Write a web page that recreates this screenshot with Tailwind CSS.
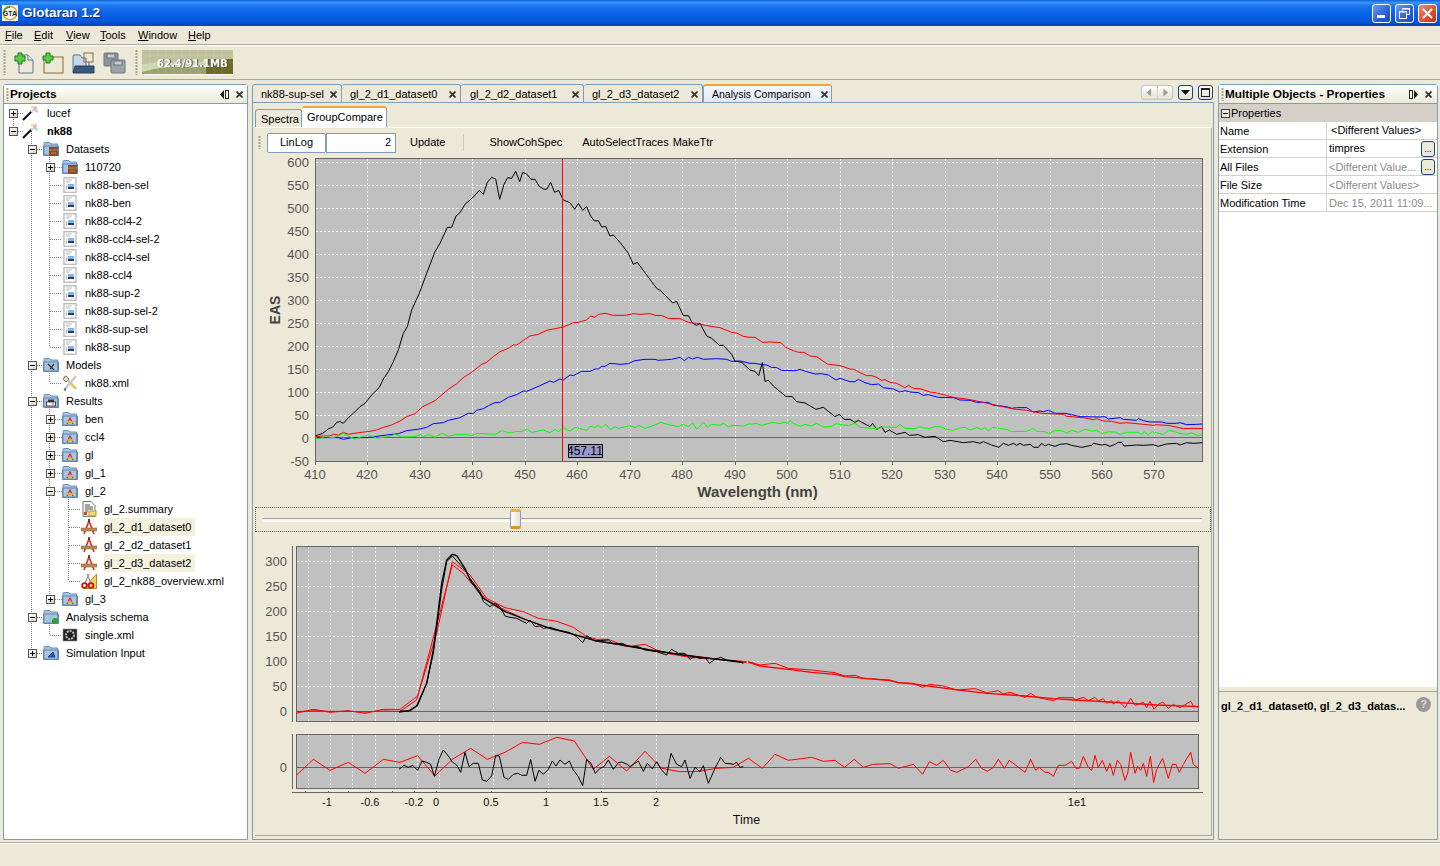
<!DOCTYPE html>
<html lang="en">
<head>
  <meta charset="UTF-8">
  <title>Glotaran 1.2</title>
  <script src="https://cdn.jsdelivr.net/npm/@tailwindcss/browser@4"></script>
</head>
<body class="w-[1440px] h-[866px] overflow-hidden flex flex-col bg-[#ece9d8] text-black text-[11px] leading-none font-['Liberation_Sans',sans-serif]">

  <!-- shared icons -->
  <svg class="hidden" width="0" height="0">
    <defs>
      <linearGradient id="fold" x1="0" y1="0" x2="0" y2="1"><stop offset="0" stop-color="#d8e6f5"/><stop offset="1" stop-color="#6b9dd0"/></linearGradient>
      <linearGradient id="docg" x1="0" y1="0" x2="1" y2="1"><stop offset="0" stop-color="#ffffff"/><stop offset="1" stop-color="#c3d4e6"/></linearGradient>
      <linearGradient id="orng" x1="0" y1="0" x2="0" y2="1"><stop offset="0" stop-color="#fbd9a6"/><stop offset="1" stop-color="#eba452"/></linearGradient>
      <symbol id="wand" viewBox="0 0 16 16">
        <path d="M1 15L10 6" stroke="#111" stroke-width="2.200"/><path d="M9 7l2-2" stroke="#ddd" stroke-width="2"/>
        <circle cx="13" cy="3" r="2" fill="#f6a6c8"/><circle cx="10" cy="2" r="1.300" fill="#f9e27a"/><circle cx="14.500" cy="6" r="1.500" fill="#9ce0b0"/><circle cx="12" cy="5" r="1.200" fill="#a8c8f4"/>
      </symbol>
      <symbol id="folder" viewBox="0 0 16 16">
        <path d="M1 14V2.500Q1 1.500 2 1.500H6.500L8 3H14.500V14Z" fill="#a8c4e2" stroke="#6a8fb5"/>
        <path d="M.5 14.500V5H15.500V14.500Z" fill="url(#fold)" stroke="#5f87b0"/>
      </symbol>
      <symbol id="f-data" viewBox="0 0 16 16"><use href="#folder"/><rect x="6" y="6" width="9" height="9" fill="#8a4a22"/><path d="M6 9h9M8 12h5" stroke="#c98a50"/></symbol>
      <symbol id="f-model" viewBox="0 0 16 16"><use href="#folder"/><path d="M5 7l6 6M7 12l4-5" stroke="#333" stroke-width="1.300"/></symbol>
      <symbol id="f-res" viewBox="0 0 16 16"><use href="#folder"/><rect x="3.500" y="9" width="9" height="4" fill="#fff" stroke="#444"/><rect x="5" y="6.500" width="6" height="2.500" fill="#333"/><path d="M9 11h2" stroke="#d33"/></symbol>
      <symbol id="f-a" viewBox="0 0 16 16"><use href="#folder"/><path d="M5 13L8 7l3 6" fill="none" stroke="#d43020" stroke-width="1.300"/><path d="M5 11h6" stroke="#f0b020" stroke-width="1.500"/></symbol>
      <symbol id="f-green" viewBox="0 0 16 16"><use href="#folder"/><path d="M4 12l7-6" stroke="#8fd0a0"/><circle cx="12" cy="12" r="3" fill="#2fa030"/></symbol>
      <symbol id="f-sim" viewBox="0 0 16 16"><use href="#folder"/><path d="M5 12L10 7l2 5Z" fill="#2a66b0" stroke="#123e78"/></symbol>
      <symbol id="doc" viewBox="0 0 16 16">
        <rect x="2" y=".7" width="12" height="14.600" fill="#fff" stroke="#bcbcbc" stroke-width="1.400"/>
        <path d="M4 3h6M4 5h4" stroke="#bbb"/><rect x="6" y="7" width="6" height="3" fill="#7fb4e6"/><rect x="6" y="10" width="6" height="2" fill="#223a66"/><path d="M4.500 8v5" stroke="#bbb"/>
      </symbol>
      <symbol id="tools" viewBox="0 0 16 16"><path d="M2 1l12 13" stroke="#e8c860" stroke-width="2.600"/><path d="M14 1L3 14" stroke="#c8c8c8" stroke-width="2.400"/><path d="M1 4l3-3 3 3-3 3Z" fill="#ddd" stroke="#777"/><path d="M2 14l2 1" stroke="#666" stroke-width="2"/></symbol>
      <symbol id="compass" viewBox="0 0 16 16"><path d="M3 15L8 2l5 13" fill="none" stroke="#d23a26" stroke-width="1.700"/><rect x="0" y="9" width="16" height="3" fill="#b98a50" stroke="#7d5a30" stroke-width=".5"/><path d="M8 0v3" stroke="#333" stroke-width="1.500"/></symbol>
      <symbol id="summary" viewBox="0 0 16 16"><path d="M2 .5H10L14 4.500V15.500H2Z" fill="#f6f6f2" stroke="#777"/><path d="M4 4h5M4 6h8M4 8h8M4 10h3" stroke="#555"/><rect x="8" y="10" width="7" height="5" fill="#f3d878" stroke="#b89a30"/><rect x="3" y="11" width="3" height="3" fill="#c05020"/></symbol>
      <symbol id="scissors" viewBox="0 0 16 16"><path d="M15.500 1V15.500H3Z" fill="#f4d060" stroke="#b08a20"/><path d="M4 10L8 1M10 10L6 1" stroke="#999" stroke-width="1.300"/><circle cx="3.500" cy="12.500" r="2.400" fill="none" stroke="#c41818" stroke-width="1.800"/><circle cx="10" cy="12.500" r="2.400" fill="none" stroke="#c41818" stroke-width="1.800"/></symbol>
      <symbol id="single" viewBox="0 0 16 16"><rect x="1" y="2" width="14" height="12" fill="#222"/><circle cx="8" cy="8" r="4" fill="none" stroke="#bbb" stroke-width="2" stroke-dasharray="2 1"/><rect x="1" y="2" width="14" height="12" fill="none" stroke="#999" stroke-width=".6"/></symbol>
      <symbol id="dots" viewBox="0 0 3 27"><path d="M1.500 1v25" stroke="#a8a490" stroke-width="2" stroke-dasharray="2 1"/></symbol>
      <symbol id="close" viewBox="0 0 7 7"><path d="M.5.5l6 6M6.500.5l-6 6" stroke="#333" stroke-width="1.700"/></symbol>
    </defs>
  </svg>

  <!-- title bar -->
  <header class="h-[26px] shrink-0 flex items-center pl-[2px] pr-[3px] bg-[linear-gradient(180deg,#0a5fdc_0%,#3b94f7_10%,#1a76ee_22%,#0a63e6_50%,#0458dc_80%,#0345b8_100%)]">
    <svg width="16" height="16" viewBox="0 0 16 16"><rect width="16" height="16" fill="#fff"/><circle cx="8" cy="8" r="6.800" fill="#fff" stroke="#d9a21c" stroke-width="1.400"/><path d="M2 8a6 6 0 0 1 6-6" fill="none" stroke="#2f9b3c" stroke-width="1.400"/><text x="8" y="10.500" text-anchor="middle" font-size="7" font-weight="700" fill="#222">GTA</text></svg>
    <span class="ml-1 text-white text-[13.500px] font-bold [text-shadow:1px_1px_#0a2a80]">Glotaran 1.2</span>
    <div class="ml-auto flex gap-1">
      <div class="w-[19px] h-[19px] rounded-[3px] border border-white bg-[linear-gradient(135deg,#6f9cf2,#2a5fdc_60%,#1d48c0)] flex items-end pl-1 pb-1"><span class="w-[8px] h-[3px] bg-white"></span></div>
      <div class="w-[19px] h-[19px] rounded-[3px] border border-white bg-[linear-gradient(135deg,#6f9cf2,#2a5fdc_60%,#1d48c0)] relative">
        <svg class="absolute inset-0" width="17" height="17" viewBox="0 0 17 17" fill="none" stroke="#fff"><path d="M6.500 5.500V3.500H13.500V9.500H11"/><path d="M3.500 6.500H10.500V13.500H3.500Z"/><path d="M3 7h8M6 4h8"/></svg>
      </div>
      <div class="w-[19px] h-[19px] rounded-[3px] border border-white bg-[linear-gradient(135deg,#ee9070,#d8502c_60%,#b83410)]">
        <svg width="17" height="17" viewBox="0 0 17 17" stroke="#fff" stroke-width="2"><path d="M4 4l9 9M13 4l-9 9"/></svg>
      </div>
    </div>
  </header>

  <!-- menu -->
  <nav class="h-[19px] shrink-0 flex items-center pl-[5px] border-b border-[#aca899] text-[11px]">
    <span class="w-[29px]"><span class="underline">F</span>ile</span>
    <span class="w-[32px]"><span class="underline">E</span>dit</span>
    <span class="w-[34px]"><span class="underline">V</span>iew</span>
    <span class="w-[38px]"><span class="underline">T</span>ools</span>
    <span class="w-[50px]"><span class="underline">W</span>indow</span>
    <span><span class="underline">H</span>elp</span>
  </nav>

  <!-- toolbar -->
  <div class="h-[35px] shrink-0 flex items-center pl-[3px] border-t border-white border-b border-b-[#aca899]">
    <svg width="3" height="27"><use href="#dots"/></svg>
    <svg class="ml-[7px]" width="22" height="22" viewBox="0 0 22 22"><path d="M6 3H15L20 8V21H6Z" fill="url(#docg)" stroke="#5d7896"/><path d="M15 3V8H20" fill="#e8eef5" stroke="#5d7896"/><path d="M5 1V4H2V9H5V12H9V9H12V4H9V1Z" fill="#5cc94a" stroke="#1c7a1c"/></svg>
    <svg class="ml-[7px]" width="22" height="22" viewBox="0 0 22 22"><rect x="2" y="5" width="19" height="16" fill="url(#orng)" stroke="#8a6a3c"/><path d="M4 1V4H1V8H4V11H8V8H11V4H8V1Z" fill="#5cc94a" stroke="#1c7a1c"/></svg>
    <svg class="ml-[8px]" width="23" height="22" viewBox="0 0 23 22"><path d="M1 20V4Q1 3 2 3H8L10 6H14V20Z" fill="#c4d6e8" stroke="#60788f"/><rect x="12" y="1" width="9" height="9" fill="url(#orng)" stroke="#8a6a3c"/><path d="M17 10v4" stroke="#555"/><path d="M1 21L3 14H22V21Z" fill="#365a7c" stroke="#24405c"/></svg>
    <svg class="ml-[8px]" width="23" height="22" viewBox="0 0 23 22" fill="#8c949c" stroke="#6e767e"><rect x="1" y="1" width="14" height="13" rx="1"/><rect x="8" y="8" width="14" height="13" rx="1" fill="#9aa2aa"/><rect x="11" y="9" width="8" height="4" fill="#c9cdd1"/><rect x="4" y="2" width="8" height="4" fill="#c9cdd1"/></svg>
    <svg class="ml-[9px]" width="3" height="27"><use href="#dots"/></svg>
    <div class="ml-[4px] relative w-[91px] h-[25px] border-b border-white bg-[#bdc19c] overflow-hidden">
      <svg class="absolute inset-0" width="91" height="25" viewBox="0 0 91 25">
        <path d="M0 14Q20 11 40 13T64 9V25H0Z" fill="#d0d8b0"/><path d="M0 22Q20 16 45 17T64 12V25H0Z" fill="#9aa26e"/><path d="M64 9H91V25H64Z" fill="#6b6a26"/>
        <path d="M0 6H91M0 12H91M8 0V25M16 0V25M24 0V25M32 0V25M40 0V25M48 0V25M56 0V25M64 0V25M72 0V25M80 0V25" stroke="#fff" stroke-opacity=".12"/>
      </svg>
      <span class="absolute left-[15px] top-[9px] text-white font-bold text-[10px] font-['DejaVu_Sans',sans-serif] [text-shadow:1px_0_#444]">62.4/91.1MB</span>
    </div>
  </div>

  <!-- main area -->
  <main class="h-[762px] shrink-0 flex pl-[3px] pt-[4px] pb-[2px]">

    <!-- projects -->
    <section class="w-[245px] flex flex-col border border-[#7f9db9] rounded-t-[3px]">
      <div class="h-[19px] shrink-0 flex items-center pl-[2px] pr-[4px] bg-[linear-gradient(180deg,#fff,#ece9d8)] border-b border-[#7f9db9]">
        <svg width="3" height="13" viewBox="0 0 3 13"><path d="M1.500 0v13" stroke="#a8a490" stroke-width="2" stroke-dasharray="2 1"/></svg>
        <span class="ml-[1px] pt-[1px] font-bold text-[11.800px]">Projects</span>
        <svg class="ml-auto" width="9" height="9" viewBox="0 0 9 9"><path d="M4 0L0 4.500 4 9Z" fill="#222"/><rect x="5.500" y=".5" width="3" height="8" fill="#fff" stroke="#222"/></svg>
        <svg class="ml-[7px]" width="7" height="7"><use href="#close"/></svg>
      </div>
      <div class="relative flex-1 bg-white overflow-hidden">
        <svg class="absolute left-0 top-0" width="243" height="560" viewBox="4 104 243 560" fill="none" stroke="#808080" stroke-dasharray="1 1" shape-rendering="crispEdges">
          <path d="M13.500 113V131M18 113.500H24M18 131.500H24"/>
          <path d="M31.500 131V653M37 149.500H43M37 365.500H43M37 401.500H43M37 617.500H43M37 653.500H43"/>
          <path d="M49.500 149V347M55 167.500H62M50 185.500H62M50 203.500H62M50 221.500H62M50 239.500H62M50 257.500H62M50 275.500H62M50 293.500H62M50 311.500H62M50 329.500H62M50 347.500H62"/>
          <path d="M49.500 365V383M50 383.500H62"/>
          <path d="M49.500 401V599M55 419.500H62M55 437.500H62M55 455.500H62M55 473.500H62M55 491.500H62M55 599.500H62"/>
          <path d="M68.500 491V581M69 509.500H81M69 527.500H81M69 545.500H81M69 563.500H81M69 581.500H81"/>
          <path d="M49.500 617V635M50 635.500H62"/>
        </svg>
        <div id="tree" class="relative"></div>
      </div>
    </section>

    <!-- editor area -->
    <section class="ml-[4px] w-[962px] flex flex-col">
      <div class="h-[18px] shrink-0 flex items-start">
        <div class="w-[90px] h-[18px] flex items-center pl-[8px] pt-[1px] border border-b-0 border-[#7f9db9] rounded-t-[3px]">nk88-sup-sel<svg class="ml-auto mr-[4px]" width="7" height="7"><use href="#close"/></svg></div>
        <div class="w-[119px] h-[18px] flex items-center pl-[8px] pt-[1px] border border-l-0 border-b-0 border-[#7f9db9] rounded-t-[3px]">gl_2_d1_dataset0<svg class="ml-auto mr-[4px]" width="7" height="7"><use href="#close"/></svg></div>
        <div class="w-[123px] h-[18px] flex items-center pl-[9px] pt-[1px] border border-l-0 border-b-0 border-[#7f9db9] rounded-t-[3px]">gl_2_d2_dataset1<svg class="ml-auto mr-[4px]" width="7" height="7"><use href="#close"/></svg></div>
        <div class="w-[119px] h-[18px] flex items-center pl-[8px] pt-[1px] border border-l-0 border-b-0 border-[#7f9db9] rounded-t-[3px]">gl_2_d3_dataset2<svg class="ml-auto mr-[4px]" width="7" height="7"><use href="#close"/></svg></div>
        <div class="w-[129px] h-[19px] flex items-center pl-[8px] text-[10.500px] border-x border-[#7f9db9] border-t-2 border-t-[#f0a830] rounded-t-[3px] bg-[linear-gradient(180deg,#f6f8fd,#dfe8f8)]">Analysis Comparison<svg class="ml-auto mr-[3px]" width="7" height="7"><use href="#close"/></svg></div>
        <div class="ml-auto flex items-center gap-[5px] pt-[1px] pr-[1px]">
          <div class="w-[32px] h-[15px] flex border border-[#b5c4d6] rounded-[3px] bg-[linear-gradient(180deg,#fff,#e4e1d0)]">
            <svg class="flex-1" viewBox="0 0 16 13"><path d="M10 2L5 6.500 10 11Z" fill="#9a9a9a"/></svg>
            <svg class="flex-1 border-l border-[#d4d0c8]" viewBox="0 0 16 13"><path d="M6 2L11 6.500 6 11Z" fill="#9a9a9a"/></svg>
          </div>
          <div class="w-[15px] h-[15px] border border-[#1c4478] rounded-[3px] bg-[linear-gradient(180deg,#fff,#e4e1d0)] flex items-center justify-center"><svg width="9" height="5"><path d="M0 0H9L4.500 5Z" fill="#111"/></svg></div>
          <div class="w-[15px] h-[15px] border border-[#1c4478] rounded-[3px] bg-[linear-gradient(180deg,#fff,#e4e1d0)] flex items-center justify-center"><span class="w-[9px] h-[9px] border border-[#222] border-t-2"></span></div>
        </div>
      </div>

      <div class="flex-1 min-h-0 flex flex-col border border-[#7f9db9] pl-[2px] pr-[1px] pb-[3px]">
        <div class="h-[24px] shrink-0 flex items-end">
          <div class="w-[47px] h-[18px] flex items-center pl-[5px] pt-[1px] border border-b-0 border-[#7f9db9] rounded-t-[3px]">Spectra</div>
          <div class="w-[85px] h-[21px] flex items-center pl-[5px] border-r border-[#999] border-t-2 border-t-[#f0a830] rounded-t-[3px] bg-white">GroupCompare</div>
        </div>

        <div class="flex-1 min-h-0 flex flex-col border-r border-b border-[#aca899] border-t border-t-white">
          <!-- chart toolbar -->
          <div class="h-[27px] shrink-0 flex items-center pl-[3px] pt-[2px]">
            <svg width="3" height="13" viewBox="0 0 3 13"><path d="M1.500 0v13" stroke="#a8a490" stroke-width="2" stroke-dasharray="2 1"/></svg>
            <div class="ml-[6px] w-[59px] h-[20px] flex items-center justify-center bg-white border border-[#7f9db9] rounded-[2px]">LinLog</div>
            <div class="w-[70px] h-[20px] flex items-center justify-end pr-[4px] bg-white border border-[#7f9db9]">2</div>
            <span class="ml-[14px]">Update</span>
            <span class="ml-[18px] w-px h-[17px] bg-[#cfcbb8]"></span>
            <span class="ml-[25px]">ShowCohSpec</span>
            <span class="ml-[20px]">AutoSelectTraces</span>
            <span class="ml-[4px]">MakeTtr</span>
          </div>

          <!-- spectra chart -->
          <svg class="shrink-0 block" width="955" height="350" viewBox="255 155 955 350">
            <rect x="315.500" y="158.500" width="887" height="303" fill="#c0c0c0" stroke="#666"/>
            <g stroke="#fff" stroke-dasharray="2 2" fill="none" shape-rendering="crispEdges" stroke-opacity=".85">
              <path d="M316 162.500H1202M316 185.500H1202M316 208.500H1202M316 231.500H1202M316 254.500H1202M316 277.500H1202M316 300.500H1202M316 323.500H1202M316 346.500H1202M316 369.500H1202M316 392.500H1202M316 415.500H1202"/>
              <path d="M367.500 159V461M420.500 159V461M472.500 159V461M525.500 159V461M577.500 159V461M630.500 159V461M682.500 159V461M735.500 159V461M787.500 159V461M840.500 159V461M892.500 159V461M945.500 159V461M997.500 159V461M1050.500 159V461M1102.500 159V461M1154.500 159V461"/>
            </g>
            <path d="M316 437.500H1202" stroke="#666"/>
            <g fill="none" stroke-width="1">
              <g transform="translate(300 155) scale(.33333)">
                <polyline vector-effect="non-scaling-stroke" stroke="#0000ff" points="45,848 75,848 115,848 130,853 155,848 200,848 260,840 295,836 320,827 360,822 380,817 400,806 430,803 445,796 480,788 505,775 520,775 530,766 550,761 565,752 585,743 600,742 625,727 650,719 670,708 680,709 720,692 750,678 760,682 780,672 790,675 810,660 820,662 845,649 870,649 885,642 895,642 905,634 915,634 930,625 960,628 985,626 1005,617 1035,613 1065,613 1075,616 1115,613 1140,607 1153,617 1165,607 1178,612 1192,607 1210,613 1250,611 1280,613 1295,619 1320,618 1350,625"/>
                <polyline vector-effect="non-scaling-stroke" stroke="#ff0000" points="45,845 70,843 90,843 100,838 115,840 130,832 145,838 175,833 210,829 230,825 250,817 275,810 300,798 320,785 345,776 368,755 405,737 445,703 470,686 490,668 515,652 545,628 560,622 580,605 600,590 620,582 640,570 650,570 690,543 715,538 740,526 760,522 790,516 820,503 835,502 860,495 872,483 885,487 895,478 915,475 940,481 975,481 1000,476 1020,478 1050,476 1065,481 1085,482 1105,490 1140,491 1165,502 1190,505 1220,512 1260,518 1295,532 1310,534 1330,544 1350,547"/>
                <polyline vector-effect="non-scaling-stroke" stroke="#000" points="45,843 68,835 85,822 100,815 110,802 120,800 130,805 145,788 160,775 180,755 195,745 215,720 238,697 250,672 265,650 280,620 295,585 310,535 322,515 335,465 358,415 380,355 405,290 420,265 442,217 455,217 468,183 480,173 495,148 518,128 538,106 550,118 562,82 575,67 587,72 599,133 612,88 623,68 635,70 647,49 659,80 668,52 680,57 693,73 705,73 717,93 730,102 740,103 752,82 764,112 776,106 790,135 810,143 824,163 835,145 848,166 860,155 872,183 883,198 895,197 905,216 917,214 930,243 940,240 960,262 985,295 1000,328 1012,322 1040,360 1070,400 1082,407 1118,444 1130,439 1150,482 1165,482 1178,505 1190,511 1200,505 1220,543 1235,550 1258,571 1270,571 1295,598 1305,618 1325,622 1350,645"/>
                <polyline vector-effect="non-scaling-stroke" stroke="#00ff00" points="45,845 55,852 75,845 100,848 115,843 130,835 145,843 165,852 180,847 205,840 230,849 265,845 285,838 305,846 345,845 360,838 370,845 385,838 405,847 425,835 445,843 475,838 500,838 515,843 530,835 585,838 605,827 630,834 650,829 665,830 680,822 695,832 730,825 750,833 765,823 775,830 790,818 810,829 825,817 860,826 870,814 885,817 895,811 905,818 917,808 930,823 945,816 955,820 990,812 1005,818 1015,811 1035,820 1055,814 1082,802 1105,809 1135,815 1150,808 1165,815 1178,804 1190,823 1210,802 1222,817 1235,808 1260,811 1270,805 1285,815 1300,811 1330,813 1350,806"/>
              </g>
              <g transform="translate(750 300) scale(.33333)">
                <polyline vector-effect="non-scaling-stroke" stroke="#0000ff" points="0,190 15,190 35,194 50,195 65,202 80,203 95,211 135,212 150,208 170,215 195,222 215,221 235,225 258,240 270,235 300,245 315,245 325,238 345,248 365,254 385,252 400,263 430,267 450,276 465,272 480,276 505,278 520,286 535,284 565,292 610,293 630,300 660,301 680,307 715,307 730,316 770,320 785,325 800,323 830,323 850,336 870,333 880,335 895,331 915,340 945,340 965,344 990,350 1050,351 1065,350 1075,357 1110,353 1120,358 1160,361 1165,356 1180,362 1200,366 1235,366 1250,370 1280,370 1290,368 1310,374 1340,373 1357,372"/>
                <polyline vector-effect="non-scaling-stroke" stroke="#ff0000" points="0,112 15,112 38,127 60,126 93,128 107,142 130,152 145,157 162,157 180,168 200,170 232,192 270,197 300,207 312,208 330,218 350,227 365,227 380,232 395,241 405,239 420,247 440,250 465,263 475,256 490,265 510,266 540,276 560,279 590,287 615,293 650,297 680,303 740,316 790,327 830,331 875,340 940,343 950,349 1000,353 1030,359 1040,356 1060,363 1085,364 1110,370 1130,368 1210,376 1220,374 1260,377 1300,386 1330,385 1357,386"/>
                <polyline vector-effect="non-scaling-stroke" stroke="#000" points="0,210 15,214 26,227 37,188 45,244 55,241 70,258 107,289 127,290 140,305 165,309 198,328 220,322 255,350 268,343 282,358 300,358 315,367 325,361 360,380 368,370 380,388 395,380 405,397 418,390 440,403 465,397 478,406 505,404 525,412 555,409 580,425 600,421 640,428 670,425 690,430 700,425 725,435 747,442 760,430 775,436 790,430 800,436 810,430 820,436 840,433 852,442 865,442 875,430 885,438 895,433 915,439 930,433 950,431 965,436 995,442 1025,436 1030,430 1055,435 1065,433 1080,439 1095,433 1105,427 1115,427 1122,438 1160,435 1180,436 1210,434 1225,439 1250,432 1280,430 1290,435 1310,428 1330,430 1357,428"/>
                <polyline vector-effect="non-scaling-stroke" stroke="#00ff00" points="0,373 20,370 35,376 70,367 90,371 105,366 113,372 120,361 130,370 150,379 165,373 185,378 200,370 220,381 245,379 258,371 295,377 305,373 315,370 330,382 380,386 400,381 440,382 450,373 465,385 495,386 510,380 520,384 540,385 555,380 570,380 590,388 610,391 625,385 645,382 660,390 680,383 695,388 705,383 715,393 727,382 770,388 785,395 830,394 850,385 860,394 885,395 895,401 915,392 935,392 950,400 965,391 985,397 1005,388 1025,393 1040,391 1055,401 1075,396 1095,396 1110,403 1130,397 1165,397 1175,404 1182,395 1195,405 1207,395 1220,398 1240,404 1255,391 1275,395 1290,400 1310,403 1325,399 1345,407 1357,402"/>
              </g>
            </g>
            <path d="M562.500 159V461" stroke="#ff0000" shape-rendering="crispEdges"/>
            <rect x="568.500" y="444.500" width="34" height="13" fill="#9999cc" stroke="#000"/>
            <svg x="569" y="445" width="33" height="12" viewBox="569 445 33 12"><text x="567" y="455" font-size="12" fill="#000">457.11</text></svg>
            <g fill="#555" font-size="13" text-anchor="end">
              <text x="309" y="167">600</text><text x="309" y="190">550</text><text x="309" y="213">500</text><text x="309" y="236">450</text><text x="309" y="259">400</text><text x="309" y="282">350</text><text x="309" y="305">300</text><text x="309" y="328">250</text><text x="309" y="351">200</text><text x="309" y="374">150</text><text x="309" y="397">100</text><text x="309" y="420">50</text><text x="309" y="443">0</text><text x="309" y="466">-50</text>
            </g>
            <path d="M315.500 462v3M367.500 462v3M420.500 462v3M472.500 462v3M525.500 462v3M577.500 462v3M630.500 462v3M682.500 462v3M735.500 462v3M787.500 462v3M840.500 462v3M892.500 462v3M945.500 462v3M997.500 462v3M1050.500 462v3M1102.500 462v3M1154.500 462v3" stroke="#666"/>
            <g fill="#555" font-size="13" text-anchor="middle">
              <text x="315" y="479">410</text><text x="367" y="479">420</text><text x="420" y="479">430</text><text x="472" y="479">440</text><text x="525" y="479">450</text><text x="577" y="479">460</text><text x="630" y="479">470</text><text x="682" y="479">480</text><text x="735" y="479">490</text><text x="787" y="479">500</text><text x="840" y="479">510</text><text x="892" y="479">520</text><text x="945" y="479">530</text><text x="997" y="479">540</text><text x="1050" y="479">550</text><text x="1102" y="479">560</text><text x="1154" y="479">570</text>
            </g>
            <text x="757.500" y="497" text-anchor="middle" font-size="15" font-weight="700" fill="#444">Wavelength (nm)</text>
            <text transform="translate(280 310) rotate(-90)" text-anchor="middle" font-size="14" font-weight="700" fill="#444">EAS</text>
          </svg>

          <!-- wavelength slider -->
          <div class="relative shrink-0 mt-[2px] h-[25px] border border-dotted border-[#666]">
            <div class="absolute left-[6px] top-[10px] w-[940px] h-[4px] border-t border-[#a0a0a0] rounded-l-[3px] bg-[#f8f7f0]"></div>
            <div class="absolute left-[254px] top-[1px] w-[11px] h-[20px] rounded-[2px] border-x border-[#8f9eb4] border-t-[3px] border-b-[3px] border-t-[#f0b040] border-b-[#e09020] bg-[linear-gradient(90deg,#fff,#e4e1d0)]"></div>
          </div>

          <!-- trace and residual charts -->
          <svg class="shrink-0 block mt-[3px]" width="955" height="300" viewBox="255 535 955 300">
            <path d="M292.500 546V722M292.500 734V789" stroke="#666"/>
            <rect x="296.500" y="546.500" width="902" height="175" fill="#c0c0c0" stroke="#666"/>
            <rect x="296.500" y="734.500" width="902" height="54" fill="#c0c0c0" stroke="#666"/>
            <g stroke="#fff" stroke-dasharray="2 2" fill="none" shape-rendering="crispEdges" stroke-opacity=".85">
              <path d="M297 561.500H1198M297 586.500H1198M297 611.500H1198M297 636.500H1198M297 661.500H1198M297 686.500H1198"/>
              <path d="M308.500 547V721M330.500 547V721M352.500 547V721M375.500 547V721M395.500 547V721M417.500 547V721M439.500 547V721M493.500 547V721M548.500 547V721M603.500 547V721M656.500 547V721M1074.500 547V721"/>
              <path d="M308.500 735V788M330.500 735V788M352.500 735V788M375.500 735V788M395.500 735V788M417.500 735V788M439.500 735V788M493.500 735V788M548.500 735V788M603.500 735V788M656.500 735V788M1074.500 735V788"/>
            </g>
            <path d="M297 711.500H1198M297 767.500H1198" stroke="#666"/>
            <g fill="none" stroke-width="1">
              <g transform="translate(250 540) scale(.33333)">
                <polyline vector-effect="non-scaling-stroke" stroke="#ff0000" points="138,520 190,508 240,517 295,512 345,520 400,508 450,508 503,468 560,280 607,65 660,105 710,175 765,203 820,215 865,235 920,244 970,262 1010,290 1040,298 1075,298 1130,320 1185,313 1220,330 1260,342 1320,352 1400,358 1490,365"/>
                <polyline vector-effect="non-scaling-stroke" stroke="#ff0000" points="138,515 190,512 240,514 295,514 345,516 400,513 450,514 500,480 560,255 607,75 640,100 660,125 710,180 765,210 830,240 900,265 960,280 1040,303 1100,312 1200,330 1300,345 1490,368"/>
                <polyline vector-effect="non-scaling-stroke" stroke="#000" points="450,513 475,513 500,497 530,430 550,340 575,150 590,65 607,48 645,90 660,115 690,155 700,185 720,200 735,190 750,200 765,228 780,232 800,235 830,250 840,240 855,260 870,258 880,265 900,262 925,270 960,278 980,290 998,308 1010,287 1035,303 1075,300 1090,312 1115,310 1140,320 1165,320 1185,330 1220,335 1250,345 1265,328 1285,340 1305,340 1320,358 1335,350 1350,355 1365,353 1378,370 1395,358 1412,352 1430,360 1450,362 1470,365 1480,370"/>
                <polyline vector-effect="non-scaling-stroke" stroke="#000" stroke-width="1.300" points="447,516 480,512 502,497 530,430 550,330 575,130 590,60 607,43 620,47 645,85 660,120 700,175 765,215 830,240 900,265 960,280 1040,303 1100,312 1200,330 1300,345 1480,368"/>
                <polyline vector-effect="non-scaling-stroke" stroke="#ff0000" points="138,707 190,658 240,691 295,667 345,700 400,658 450,667 503,647 555,708 607,658 662,625 712,658 765,637 818,607 868,613 920,592 973,603 1030,688 1078,649 1130,693 1185,634 1235,685 1290,695 1345,694 1400,685 1450,682 1495,655"/>
                <polyline vector-effect="non-scaling-stroke" stroke="#000" points="447,688 462,676 475,682 488,676 503,691 516,663 530,667 542,673 553,709 568,655 580,630 595,648 607,666 620,675 632,697 645,637 657,680 670,670 685,670 697,720 710,724 725,708 737,647 748,648 762,712 775,718 790,703 803,700 817,706 830,706 842,658 855,724 867,691 880,703 895,688 907,663 918,678 930,660 945,673 958,663 970,690 985,710 998,737 1010,658 1023,670 1036,700 1050,685 1062,680 1075,660 1090,688 1105,668 1115,666 1130,672 1140,680 1165,663 1180,694 1192,670 1207,687 1220,665 1235,690 1250,706 1263,640 1280,673 1295,680 1305,660 1320,715 1335,682 1350,695 1360,677 1375,730 1395,685 1412,652 1425,670 1440,671 1450,673 1460,667 1470,682 1480,680"/>
              </g>
              <g transform="translate(740 640) scale(.33333)">
                <polyline vector-effect="non-scaling-stroke" stroke="#ff0000" points="25,65 60,75 105,70 145,85 215,90 285,98 315,108 345,106 370,115 450,120 475,128 520,130 548,142 568,133 610,138 650,150 705,146 740,158 775,152 790,162 810,157 855,172 872,160 890,172 940,182 955,173 1000,173 1005,180 1030,172 1045,182 1065,172 1075,183 1090,176 1100,190 1115,182 1120,192 1135,182 1155,203 1172,175 1185,196 1210,187 1220,203 1230,184 1242,208 1255,193 1268,186 1285,205 1300,193 1320,203 1352,184 1360,198 1375,201"/>
                <polyline vector-effect="non-scaling-stroke" stroke="#ff0000" stroke-width="1.400" points="25,66 60,78 145,88 215,97 285,103 315,110 450,122 475,128 520,132 640,148 740,160 855,168 940,176 1005,180 1140,188 1250,195 1375,200"/>
                <polyline vector-effect="non-scaling-stroke" stroke="#ff0000" points="25,355 67,385 105,343 145,361 215,352 250,364 285,361 313,382 343,358 370,382 398,373 450,371 475,385 520,373 548,403 568,365 590,376 610,361 632,391 650,397 685,380 707,358 725,385 742,394 760,382 775,358 793,385 808,361 855,397 872,358 887,391 898,382 915,397 925,397 940,409 955,376 975,376 995,364 1008,385 1018,385 1030,349 1045,382 1055,391 1065,346 1075,382 1087,361 1100,394 1110,370 1120,406 1132,361 1142,373 1155,421 1163,400 1172,337 1185,400 1193,379 1202,391 1210,370 1220,409 1231,349 1241,427 1250,388 1268,355 1285,415 1297,373 1308,373 1318,397 1330,373 1352,337 1360,373 1375,385"/>
              </g>
            </g>
            <g fill="#555" font-size="13" text-anchor="end">
              <text x="287" y="566">300</text><text x="287" y="591">250</text><text x="287" y="616">200</text><text x="287" y="641">150</text><text x="287" y="666">100</text><text x="287" y="691">50</text><text x="287" y="716">0</text><text x="287" y="772">0</text>
            </g>
            <path d="M292 792.500H1203M305.500 793v-2M328.500 793v-2M348.500 793v-2M370.500 793v-2M392.500 793v-2M414.500 793v-2M436.500 793v-2M491.500 793v-2M546.500 793v-2M601.500 793v-2M656.500 793v-2M1076.500 793v-2" stroke="#666" fill="none"/>
            <g fill="#111" font-size="11" text-anchor="middle">
              <text x="327" y="806">-1</text><text x="370" y="806">-0.6</text><text x="414" y="806">-0.2</text><text x="436" y="806">0</text><text x="491" y="806">0.5</text><text x="546" y="806">1</text><text x="601" y="806">1.5</text><text x="656" y="806">2</text><text x="1077" y="806">1e1</text>
            </g>
            <text x="746.500" y="824" text-anchor="middle" font-size="12.500" fill="#111">Time</text>
          </svg>
        </div>
      </div>
    </section>

    <!-- properties -->
    <section class="ml-[4px] w-[220px] flex flex-col border border-[#7f9db9] rounded-t-[3px]">
      <div class="h-[19px] shrink-0 flex items-center pl-[2px] pr-[5px] bg-[linear-gradient(180deg,#fff,#ece9d8)] border-b border-[#7f9db9]">
        <svg width="3" height="13" viewBox="0 0 3 13"><path d="M1.500 0v13" stroke="#a8a490" stroke-width="2" stroke-dasharray="2 1"/></svg>
        <span class="ml-[1px] pt-[1px] font-bold text-[11.800px]">Multiple Objects - Properties</span>
        <svg class="ml-auto" width="9" height="9" viewBox="0 0 9 9"><rect x=".5" y=".5" width="3" height="8" fill="#fff" stroke="#222"/><path d="M5 0L9 4.500 5 9Z" fill="#222"/></svg>
        <svg class="ml-[7px]" width="7" height="7"><use href="#close"/></svg>
      </div>
      <div class="h-[583px] shrink-0 bg-white">
        <div class="h-[18px] flex items-center pl-[2px] bg-[#d4d0c8]">
          <span class="w-[9px] h-[9px] border border-[#444] bg-[#ece9d8] flex items-center justify-center"><span class="w-[5px] h-px bg-black"></span></span>
          <span class="ml-[1px]">Properties</span>
        </div>
        <div class="h-[18px] flex border-b border-[#d4d0c8]"><span class="w-[108px] border-r border-[#d4d0c8] pl-[1px] pt-[1px] flex items-center">Name</span><span class="flex-1 pl-[4px] flex items-center">&lt;Different Values&gt;</span></div>
        <div class="h-[18px] flex border-b border-[#d4d0c8]"><span class="w-[108px] border-r border-[#d4d0c8] pl-[1px] pt-[1px] flex items-center">Extension</span><span class="flex-1 pl-[2px] pr-[2px] flex items-center">timpres<span class="ml-auto w-[14px] h-[16px] border border-[#1c4478] rounded-[3px] bg-[#ece9d8] flex items-end justify-center text-[9px] pb-[2px]">...</span></span></div>
        <div class="h-[18px] flex border-b border-[#d4d0c8]"><span class="w-[108px] border-r border-[#d4d0c8] pl-[1px] pt-[1px] flex items-center">All Files</span><span class="flex-1 pl-[2px] pr-[2px] flex items-center text-[#8c8c8c]"><span class="pt-[1px]">&lt;Different Value...</span><span class="ml-auto w-[14px] h-[16px] border border-[#1c4478] rounded-[3px] bg-[#ece9d8] flex items-end justify-center text-[9px] pb-[2px] text-black">...</span></span></div>
        <div class="h-[18px] flex border-b border-[#d4d0c8]"><span class="w-[108px] border-r border-[#d4d0c8] pl-[1px] pt-[1px] flex items-center">File Size</span><span class="flex-1 pl-[2px] pt-[1px] flex items-center text-[#8c8c8c]">&lt;Different Values&gt;</span></div>
        <div class="h-[18px] flex border-b border-[#d4d0c8]"><span class="w-[108px] border-r border-[#d4d0c8] pl-[1px] pt-[1px] flex items-center">Modification Time</span><span class="flex-1 pl-[2px] pt-[1px] flex items-center text-[#8c8c8c] whitespace-nowrap overflow-hidden">Dec 15, 2011 11:09...</span></div>
      </div>
      <div class="flex-1 mt-[4px] border-t border-[#aca899] flex items-start pt-[5px] pl-[2px] pr-[6px]">
        <span class="font-bold text-[11.100px] mt-[4px]">gl_2_d1_dataset0, gl_2_d3_datas...</span>
        <span class="ml-auto w-[15px] h-[15px] rounded-full bg-[#999] text-[#d8d8d8] font-bold flex items-center justify-center text-[11px]">?</span>
      </div>
    </section>
  </main>

  <!-- status bar -->
  <footer class="flex-1 border-t border-[#aca899] shadow-[inset_0_1px_#fff]"></footer>

  <script>
    const tree = [
      [0, "+", "wand", "lucef"],
      [0, "-", "wand", "nk88", "bold"],
      [1, "-", "f-data", "Datasets"],
      [2, "+", "f-data", "110720"],
      [2, "", "doc", "nk88-ben-sel"],
      [2, "", "doc", "nk88-ben"],
      [2, "", "doc", "nk88-ccl4-2"],
      [2, "", "doc", "nk88-ccl4-sel-2"],
      [2, "", "doc", "nk88-ccl4-sel"],
      [2, "", "doc", "nk88-ccl4"],
      [2, "", "doc", "nk88-sup-2"],
      [2, "", "doc", "nk88-sup-sel-2"],
      [2, "", "doc", "nk88-sup-sel"],
      [2, "", "doc", "nk88-sup"],
      [1, "-", "f-model", "Models"],
      [2, "", "tools", "nk88.xml"],
      [1, "-", "f-res", "Results"],
      [2, "+", "f-a", "ben"],
      [2, "+", "f-a", "ccl4"],
      [2, "+", "f-a", "gl"],
      [2, "+", "f-a", "gl_1"],
      [2, "-", "f-a", "gl_2"],
      [3, "", "summary", "gl_2.summary"],
      [3, "", "compass", "gl_2_d1_dataset0", "sel"],
      [3, "", "compass", "gl_2_d2_dataset1"],
      [3, "", "compass", "gl_2_d3_dataset2", "sel"],
      [3, "", "scissors", "gl_2_nk88_overview.xml"],
      [2, "+", "f-a", "gl_3"],
      [1, "-", "f-green", "Analysis schema"],
      [2, "", "single", "single.xml"],
      [1, "+", "f-sim", "Simulation Input"]
    ];
    const pad = ["pl-[5px]", "pl-[24px]", "pl-[42px]", "pl-[61px]"];
    const slot = ["w-[13px]", "w-[15px]", "w-[16px]", "w-[16px]"];
    const gap = ["ml-[9px]", "ml-[7px]", "ml-[7px]", "ml-[7px]"];

    document.getElementById("tree").innerHTML = tree.map(([lvl, exp, icon, label, mod]) => {
      let box = "";
      if (exp) {
        const plus = exp === "+" ? '<span class="absolute left-[3px] top-[1px] w-px h-[5px] bg-black"></span>' : "";
        box = `<span class="relative block w-[9px] h-[9px] border border-[#555] bg-[linear-gradient(135deg,#fff,#d8d4c0)]"><span class="absolute left-[1px] top-[3px] w-[5px] h-px bg-black"></span>${plus}</span>`;
      }
      const text = mod === "sel" ? "bg-[#f5f1df] w-[91px] h-[18px] flex items-center" : mod === "bold" ? "font-bold" : "";
      return `<div class="h-[18px] flex items-center whitespace-nowrap ${pad[lvl]}">
        <span class="${slot[lvl]} shrink-0">${box}</span>
        <svg class="shrink-0" width="16" height="16"><use href="#${icon}"/></svg>
        <span class="${gap[lvl]} ${text}">${label}</span>
      </div>`;
    }).join("");
  </script>
</body>
</html>
